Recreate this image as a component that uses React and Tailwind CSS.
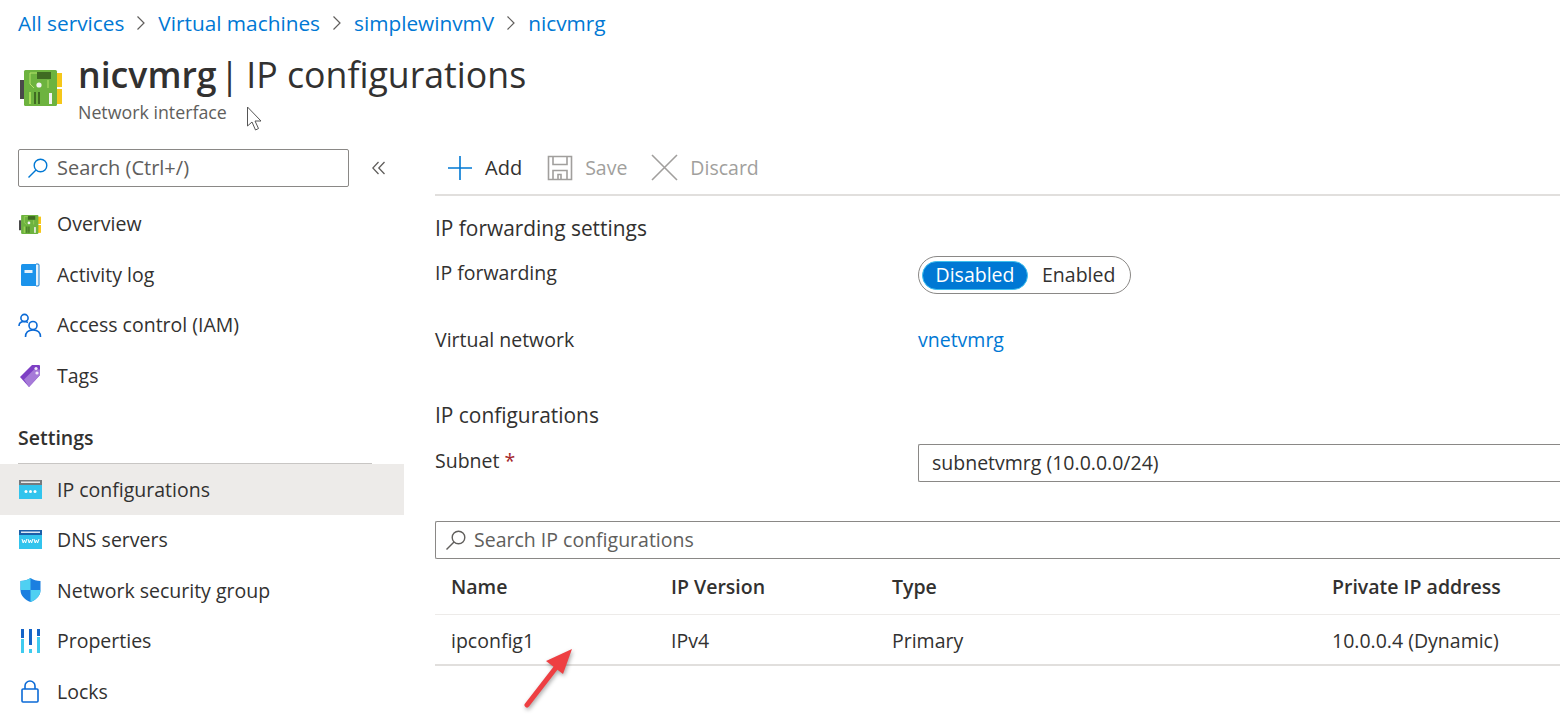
import React from "react";

const NicIcon = ({ s = 42 }) => (
  <svg width={s} height={s * 38 / 42} viewBox="0 0 42 38">
    <rect x="0" y="12" width="5" height="19" fill="#4a4a4a" />
    <rect x="36" y="5" width="6" height="14" fill="#f5c71a" />
    <rect x="36" y="21" width="6" height="15" fill="#f5c71a" />
    <rect x="4" y="2" width="33" height="36" rx="1.5" fill="#6db33f" />
    <rect x="17" y="4" width="14" height="7" fill="#3f6b22" />
    <path d="M10 5h7M10 5v11M28 12v8M10 16l4 4" stroke="#b5e26a" strokeWidth="1" fill="none" />
    <circle cx="19" cy="17" r="2.6" fill="#f4f4f4" />
    <rect x="14" y="24" width="2" height="12" fill="#3f6b22" />
    <rect x="18" y="24" width="2" height="12" fill="#3f6b22" />
    <rect x="29" y="25" width="3" height="11" fill="#f4f4f4" />
    <rect x="9" y="24" width="2" height="12" fill="#a6dc5a" />
  </svg>
);

const Search = ({ color = "#0078d4" }) => (
  <svg width="22" height="22" viewBox="0 0 22 22" fill="none" stroke={color} strokeWidth="1.4">
    <circle cx="13.5" cy="8.5" r="6.3" />
    <path d="M9 13L1.5 20.5" />
  </svg>
);

const Chevron = () => (
  <svg className="mx-[12px] shrink-0" width="10" height="16" viewBox="0 0 10 16" fill="none" stroke="#605e5c" strokeWidth="1.2">
    <path d="M1.500 1.500L8 8l-6.500 6.500" />
  </svg>
);

const menuIcons = {
  book: (
    <svg width="20" height="24" viewBox="0 0 20 24">
      <rect x="1" y="1" width="18" height="22" rx="1.5" fill="#1b93eb" />
      <path d="M16 1h2a1 1 0 011 1v20a1 1 0 01-1 1h-2" fill="#e8f3fb" stroke="#1b7fd0" strokeWidth="1" />
      <rect x="4.5" y="7" width="8" height="3" fill="#e6f2fb" />
    </svg>
  ),
  people: (
    <svg width="24" height="25" viewBox="0 0 24 25" fill="none" stroke="#0b6ad6" strokeWidth="1.6">
      <circle cx="6.5" cy="5" r="3.6" />
      <path d="M1 13c0-3 2.500-4.500 5.500-4.500 1.500 0 2.500.4 3.500 1" />
      <circle cx="15" cy="12.500" r="4" />
      <path d="M7.500 24c0-4.500 3-7 7.500-7s7.500 2.500 7.500 7" />
    </svg>
  ),
  tag: (
    <svg width="22" height="24" viewBox="0 0 22 24">
      <path d="M1 13L13 1h7a1 1 0 011 1v9L10 23z" fill="#7d3fc4" />
      <path d="M5 15.500L15 5.500h6v5.500L10 23z" fill="#a67ad8" />
      <circle cx="17" cy="4.500" r="1.600" fill="#f2e9fb" />
      <circle cx="18" cy="9" r="1.600" fill="#f2e9fb" />
    </svg>
  ),
  ip: (
    <svg width="23" height="19" viewBox="0 0 23 19">
      <rect width="23" height="19" fill="#32c4ed" />
      <rect width="23" height="5" fill="#76797c" />
      <rect x="2" y="1.500" width="19" height="1.500" fill="#e9e9e9" />
      <circle cx="7" cy="11.500" r="1.500" fill="#fff" />
      <circle cx="11.500" cy="11.500" r="1.500" fill="#fff" />
      <circle cx="16" cy="11.500" r="1.500" fill="#fff" />
    </svg>
  ),
  dns: (
    <svg width="23" height="19" viewBox="0 0 23 19">
      <rect width="23" height="19" fill="#32c4ed" />
      <rect width="23" height="5" fill="#1c5fa8" />
      <rect x="2" y="1.500" width="19" height="1.500" fill="#dce9f5" />
      <path d="M3 9l1.200 4 1.200-3 1.200 3L7.800 9M9 9l1.200 4 1.200-3 1.200 3 1.200-4M15 9l1.200 4 1.200-3 1.200 3L20 9" fill="none" stroke="#fff" strokeWidth="1" />
    </svg>
  ),
  shield: (
    <svg width="21" height="24" viewBox="0 0 21 24">
      <path d="M10.500 0C8 2 4 3 .5 3v9c0 6 5 10 10 12 5-2 10-6 10-12V3c-3.500 0-7.500-1-10-3z" fill="#1b7fe0" />
      <path d="M10.500 0C8 2 4 3 .5 3v9h10zM10.500 12v12c5-2 10-6 10-12z" fill="#4fd0f2" />
    </svg>
  ),
  props: (
    <svg width="19" height="24" viewBox="0 0 19 24">
      <rect x="0" y="0" width="3" height="9" fill="#1464c8" />
      <rect x="0" y="10" width="3" height="14" fill="#3fcbef" />
      <rect x="8" y="0" width="3" height="16" fill="#1464c8" />
      <rect x="8" y="20" width="3" height="4" fill="#3fcbef" />
      <rect x="16" y="0" width="3" height="7" fill="#1464c8" />
      <rect x="16" y="8" width="3" height="16" fill="#3fcbef" />
    </svg>
  ),
  lock: (
    <svg width="18" height="23" viewBox="0 0 18 23" fill="none" stroke="#0b6ad6" strokeWidth="1.600">
      <rect x="1" y="9" width="16" height="13" rx="1" />
      <path d="M4 9V6a5 5 0 0110 0v3" />
    </svg>
  ),
};

const MenuRow = ({ icon, label, active, nudge }) => (
  <div className={`flex items-center h-[50.6px] ${active ? "bg-[#edebe9]" : ""}`}>
    <div className="w-[57px] pl-[18px] pr-[15px] flex justify-center shrink-0">{icon}</div>
    <span className={`text-[#323130] ${nudge ? "pt-[2px]" : ""}`}>{label}</span>
  </div>
);

export default function App() {
  return (
    <div
      className="relative w-[1560px] h-[728px] overflow-hidden bg-white text-[19.5px] leading-[26px] text-[#323130]"
      style={{ fontFamily: '"Open Sans", sans-serif' }}
    >
      {/* breadcrumb */}
      <div className="flex items-center h-[45px] pl-[18px] text-[#0078d4] text-[20.8px]">
        <span>All services</span>
        <Chevron />
        <span>Virtual machines</span>
        <Chevron />
        <span>simplewinvmV</span>
        <Chevron />
        <span>nicvmrg</span>
      </div>

      {/* header */}
      <div className="flex h-[95px] pl-[20px] pt-[2px]">
        <div className="pt-[21px] w-[58px] shrink-0"><NicIcon /></div>
        <div>
          <div className="text-[35.7px] leading-[56px] whitespace-nowrap flex mt-[-1px]">
            <span className="font-semibold">nicvmrg</span>
            <span className="ml-[3px]">|</span>
            <span className="ml-[7px]">IP configurations</span>
          </div>
          <div className="text-[17.8px] leading-[22px] text-[#605e5c] mt-[-1px]">Network interface</div>
        </div>
      </div>

      <div className="flex">
        {/* sidebar */}
        <div className="w-[404px] shrink-0 pt-[9px]">
          <div className="flex items-center pl-[18px] mb-[12px]">
            <div className="flex items-center gap-[8px] w-[331px] h-[38px] border border-[#8a8886] rounded-[2px] pl-[8px] text-[#605e5c] text-[20px]">
              <Search />
              <span>Search (Ctrl+/)</span>
            </div>
            <svg className="ml-[23px]" width="13" height="14" viewBox="0 0 13 14" fill="none" stroke="#605e5c" strokeWidth="1.3">
              <path d="M6.500 1L.8 7l5.700 6M12.500 1L6.800 7l5.700 6" />
            </svg>
          </div>
          <MenuRow icon={<NicIcon s={22} />} label="Overview" />
          <MenuRow icon={menuIcons.book} label="Activity log" />
          <MenuRow icon={menuIcons.people} label="Access control (IAM)" />
          <MenuRow icon={menuIcons.tag} label="Tags" />
          <div className="mx-[18px] w-[354px] h-[62px] flex items-end pb-[12px] border-b border-[#c8c6c4] mt-[0.6px] font-semibold">
            Settings
          </div>
          <MenuRow icon={menuIcons.ip} label="IP configurations" active nudge />
          <MenuRow icon={menuIcons.dns} label="DNS servers" />
          <MenuRow icon={menuIcons.shield} label="Network security group" nudge />
          <MenuRow icon={menuIcons.props} label="Properties" />
          <MenuRow icon={menuIcons.lock} label="Locks" />
        </div>

        {/* content */}
        <div className="flex-1 pl-[31px] min-w-0">
          {/* toolbar */}
          <div className="flex items-center h-[56px] border-b-2 border-[#e1dfdd] pt-[1px] pl-[12px]">
            <svg width="26" height="26" viewBox="0 0 26 26" stroke="#0078d4" strokeWidth="1.600">
              <path d="M13 1v24M1 13h24" />
            </svg>
            <span className="ml-[12px] text-[20px]">Add</span>
            <svg className="ml-[25px]" width="26" height="26" viewBox="0 0 26 26" fill="none" stroke="#a19f9d" strokeWidth="1.600">
              <path d="M1.500 1.500h23v23h-23zM6 1.500v8h14v-8M6 24.500v-9h14v9M11 24.500v-5h3v5" />
            </svg>
            <span className="ml-[12px] text-[#a19f9d]">Save</span>
            <svg className="ml-[24px]" width="27" height="27" viewBox="0 0 27 27" stroke="#a19f9d" strokeWidth="1.600">
              <path d="M1 1l25 25M26 1L1 26" />
            </svg>
            <span className="ml-[12px] text-[#a19f9d]">Discard</span>
          </div>

          <div className="pt-[19px] h-[60px] text-[20.9px]">IP forwarding settings</div>
          <div className="grid grid-cols-[483px_1fr] items-start">
            <div className="pt-[4px]">IP forwarding</div>
            <div className="flex items-center w-[213px] h-[38px] border border-[#8a8886] rounded-full pl-[3px]">
              <div className="flex items-center justify-center w-[106px] h-[29px] rounded-full bg-[#0078d4] text-white border border-[#3fc0ee]">Disabled</div>
              <div className="pl-[14px]">Enabled</div>
            </div>
            <div className="pt-[33px] col-start-1">Virtual network</div>
            <div className="pt-[33px] text-[#0078d4]">vnetvmrg</div>
          </div>

          <div className="pt-[49px] text-[20.9px]">IP configurations</div>
          <div className="grid grid-cols-[483px_1fr] items-start mt-[16px]">
            <div className="pt-[4px]">Subnet <span className="text-[#a4262c]">*</span></div>
            <div className="flex items-center h-[38px] border border-[#8a8886] border-r-0 rounded-l-[2px] pl-[13px]">subnetvmrg (10.0.0.0/24)</div>
          </div>

          <div className="flex items-center gap-[7px] h-[38px] mt-[39px] border border-[#8a8886] border-r-0 rounded-l-[2px] pl-[9px] text-[#605e5c]">
            <Search color="#605e5c" />
            <span>Search IP configurations</span>
          </div>

          <div className="grid grid-cols-[220px_221px_440px_1fr] pl-[16px] pt-[1px] items-center h-[56px] border-b border-[#edebe9] font-semibold">
            <div>Name</div>
            <div>IP Version</div>
            <div>Type</div>
            <div>Private IP address</div>
          </div>
          <div className="grid grid-cols-[220px_221px_440px_1fr] pl-[16px] pt-[2px] items-center h-[51px] border-b-2 border-[#e1dfdd]">
            <div>ipconfig1</div>
            <div>IPv4</div>
            <div>Primary</div>
            <div>10.0.0.4 (Dynamic)</div>
          </div>
        </div>
      </div>

      {/* mouse cursor */}
      <svg className="absolute left-[246px] top-[106px]" width="18" height="26" viewBox="0 0 18 26" fill="#fff" stroke="#555" strokeWidth="1">
        <path d="M1.500 1v19l4.500-4 3.500 8 3-1.500-3.500-7.500h6z" />
      </svg>

      {/* arrow annotation */}
      <svg className="absolute left-[520px] top-[645px] drop-shadow-[1px_2px_2px_rgba(0,0,0,0.35)]" width="56" height="66" viewBox="0 0 56 66" fill="none">
        <path d="M7 60L38 20" stroke="#ee3f42" strokeWidth="5" strokeLinecap="round" />
        <path d="M52 4L26 16l17 13z" fill="#ee3f42" />
      </svg>
    </div>
  );
}
